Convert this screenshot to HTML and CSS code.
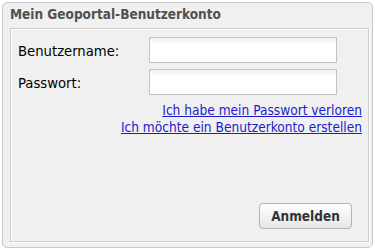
FILE: index.html
```html
<!DOCTYPE html>
<html lang="de">
<head>
    <meta charset="UTF-8">
    <title>Mein Geoportal-Benutzerkonto</title>
    <link rel="stylesheet" href="styles.css">
</head>
<body>

    <div class="panel">
        <div class="panel-header">Mein Geoportal-Benutzerkonto</div>

        <!-- Login form -->
        <div class="panel-body">
            <div class="form-row">
                <label for="username">Benutzername:</label>
                <input type="text" id="username" autofocus>
            </div>
            <div class="form-row">
                <label for="password">Passwort:</label>
                <input type="password" id="password">
            </div>

            <div class="links">
                <a href="#">Ich habe mein Passwort verloren</a>
                <a href="#">Ich möchte ein Benutzerkonto erstellen</a>
            </div>

            <div class="buttons">
                <button type="button">Anmelden</button>
            </div>
        </div>
    </div>

</body>
</html>
```

FILE: styles.css
```css
* {
    box-sizing: border-box;
    font-family: 'DejaVu Sans Condensed', 'DejaVu Sans', sans-serif;
}
body {
    margin: 0;
    background: #ffffff;
}
.panel {
    margin: 2px 2px 0 2px;
    width: 371px;
    height: 246px;
    background: #f0f0f0;
    border: 1px solid #c9c9c9;
    border-radius: 5px;
    display: flex;
    flex-direction: column;
    padding: 0 3px 5px 7px;
}
.panel-header {
    height: 25px;
    line-height: 22px;
    font-size: 13.5px;
    font-weight: bold;
    color: #505050;
    padding-left: 0;
}
.panel-body {
    flex: 1;
    border: 1px solid #cdcdcd;
    box-shadow: inset 1px 1px 0 #ffffff, 1px 1px 0 #ffffff;
    padding: 8px 6px 12px 7px;
    display: flex;
    flex-direction: column;
}
.form-row {
    display: flex;
    align-items: center;
    margin-bottom: 6px;
}
.form-row label {
    width: 131px;
    font-size: 14.7px;
    color: #000;
}
.form-row input {
    width: 188px;
    height: 26px;
    margin: 0;
    border: 1px solid #c3c3c3;
    background: linear-gradient(#eef0f2, #ffffff 6px);
    font-size: 13px;
    padding: 2px 6px;
    outline: none;
}
.links {
    display: flex;
    flex-direction: column;
    align-items: flex-end;
    margin-top: 1px;
}
.links a {
    color: #1c1ccc;
    font-size: 13.6px;
    line-height: 17px;
}
.buttons {
    margin-top: auto;
    display: flex;
    justify-content: flex-end;
    padding-right: 10px;
}
button {
    width: 93px;
    height: 26px;
    border: 1px solid #b4b4b4;
    border-radius: 4px;
    background: linear-gradient(#ffffff, #e6e6e6);
    font-size: 13.5px;
    font-weight: bold;
    color: #333333;
    cursor: pointer;
}
```
